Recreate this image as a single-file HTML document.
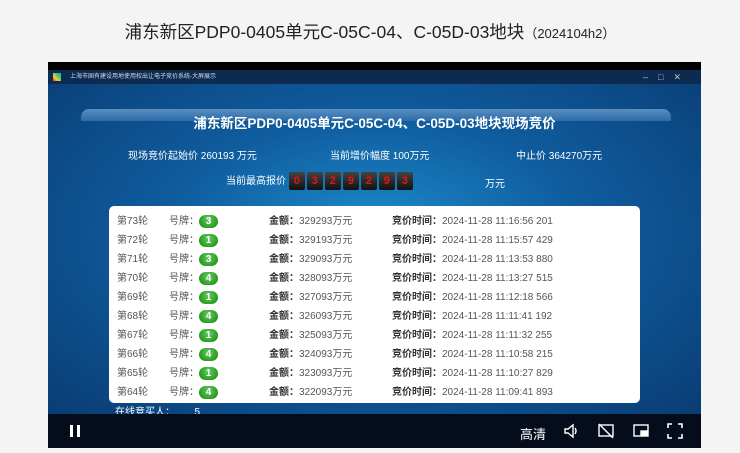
<!DOCTYPE html>
<html><head><meta charset="utf-8"><style>
*{margin:0;padding:0;box-sizing:border-box}
body{width:740px;height:453px;background:#f4f4f4;position:relative;overflow:hidden;font-family:"Liberation Sans","Noto Sans CJK SC",sans-serif}
.title{position:absolute;top:19px;left:0;width:740px;text-align:center;font-size:17.5px;color:#222}
.title small{font-size:13px}
.video{position:absolute;left:48px;top:62px;width:653px;height:386px;background:#000;overflow:hidden}
.tb{position:absolute;left:0;top:8px;width:100%;height:14px;background:#0d2a50;color:#cde;font-size:6px;line-height:14px;padding-left:22px}
.tb i{position:absolute;left:5px;top:3px;width:8px;height:8px;background:linear-gradient(45deg,#e33,#fc3,#3c6,#39f)}
.tb span{position:absolute;right:10px;top:0;font-size:9px;letter-spacing:10px;color:#bbb}
.bg{position:absolute;left:0;top:22px;width:100%;height:332px;background:radial-gradient(ellipse at 50% 45%,#1d8ccc 0%,#0f5c9e 45%,#0a3c74 100%)}
.hd{position:absolute;left:33px;top:47px;width:590px;height:12px;border-radius:8px 8px 0 0;background:linear-gradient(#5b8fc0,#2a6aa8)}
.h1{position:absolute;top:50px;left:0;width:100%;text-align:center;color:#fff;font-weight:bold;font-size:13.5px}
.info{position:absolute;top:85px;color:#fff;font-size:10px}
.box{position:absolute;left:61px;top:144px;width:531px;height:197px;background:#fff;border-radius:5px}
.row{position:absolute;left:8px;height:19px;font-size:10px;color:#555;width:520px}
.row span{position:absolute;top:0}
.b{font-weight:bold;color:#333}
.b b{font-weight:normal;color:#555}
.n{display:inline-block;width:19px;height:13px;border-radius:7px;background:radial-gradient(circle at 50% 35%,#6c6,#180);color:#fff;font-weight:bold;text-align:center;line-height:13px;font-size:10px;font-style:normal}
.d{display:inline-block;width:16px;height:18px;margin-right:2px;background:linear-gradient(#444,#111);border-radius:2px;color:#e11;font-weight:bold;text-align:center;line-height:18px;font-size:11px}
.ctrl{position:absolute;left:0;top:352px;width:100%;height:34px;background:#050d1c;color:#fff}
</style></head><body>
<div class="title">浦东新区PDP0-0405单元C-05C-04、C-05D-03地块<small>（2024104h2）</small></div>
<div class="video">
<div class="tb"><i></i>上海市国有建设用地使用权出让电子竞价系统-大屏展示<span>–□✕</span></div>
<div class="bg"></div>
<div class="hd"></div>
<div class="h1">浦东新区PDP0-0405单元C-05C-04、C-05D-03地块现场竞价</div>
<div class="info" style="left:80px">现场竞价起始价 260193 万元</div>
<div class="info" style="left:282px">当前增价幅度 100万元</div>
<div class="info" style="left:468px">中止价 364270万元</div>
<div class="info" style="left:178px;top:110px;line-height:18px">当前最高报价 <span class="d">0</span><span class="d">3</span><span class="d">2</span><span class="d">9</span><span class="d">2</span><span class="d">9</span><span class="d">3</span></div>
<div class="info" style="left:437px;top:113px">万元</div>
<div class="box">
<div class="row" style="top:6px"><span>第73轮</span><span style="left:52px">号牌：<i class="n">3</i></span><span class="b" style="left:152px">金额：<b>329293万元</b></span><span class="b" style="left:275px">竞价时间：<b>2024-11-28 11:16:56 201</b></span></div>
<div class="row" style="top:25px"><span>第72轮</span><span style="left:52px">号牌：<i class="n">1</i></span><span class="b" style="left:152px">金额：<b>329193万元</b></span><span class="b" style="left:275px">竞价时间：<b>2024-11-28 11:15:57 429</b></span></div>
<div class="row" style="top:44px"><span>第71轮</span><span style="left:52px">号牌：<i class="n">3</i></span><span class="b" style="left:152px">金额：<b>329093万元</b></span><span class="b" style="left:275px">竞价时间：<b>2024-11-28 11:13:53 880</b></span></div>
<div class="row" style="top:63px"><span>第70轮</span><span style="left:52px">号牌：<i class="n">4</i></span><span class="b" style="left:152px">金额：<b>328093万元</b></span><span class="b" style="left:275px">竞价时间：<b>2024-11-28 11:13:27 515</b></span></div>
<div class="row" style="top:82px"><span>第69轮</span><span style="left:52px">号牌：<i class="n">1</i></span><span class="b" style="left:152px">金额：<b>327093万元</b></span><span class="b" style="left:275px">竞价时间：<b>2024-11-28 11:12:18 566</b></span></div>
<div class="row" style="top:101px"><span>第68轮</span><span style="left:52px">号牌：<i class="n">4</i></span><span class="b" style="left:152px">金额：<b>326093万元</b></span><span class="b" style="left:275px">竞价时间：<b>2024-11-28 11:11:41 192</b></span></div>
<div class="row" style="top:120px"><span>第67轮</span><span style="left:52px">号牌：<i class="n">1</i></span><span class="b" style="left:152px">金额：<b>325093万元</b></span><span class="b" style="left:275px">竞价时间：<b>2024-11-28 11:11:32 255</b></span></div>
<div class="row" style="top:139px"><span>第66轮</span><span style="left:52px">号牌：<i class="n">4</i></span><span class="b" style="left:152px">金额：<b>324093万元</b></span><span class="b" style="left:275px">竞价时间：<b>2024-11-28 11:10:58 215</b></span></div>
<div class="row" style="top:158px"><span>第65轮</span><span style="left:52px">号牌：<i class="n">1</i></span><span class="b" style="left:152px">金额：<b>323093万元</b></span><span class="b" style="left:275px">竞价时间：<b>2024-11-28 11:10:27 829</b></span></div>
<div class="row" style="top:177px"><span>第64轮</span><span style="left:52px">号牌：<i class="n">4</i></span><span class="b" style="left:152px">金额：<b>322093万元</b></span><span class="b" style="left:275px">竞价时间：<b>2024-11-28 11:09:41 893</b></span></div>
</div>
<div class="info" style="left:67px;top:341px">在线竞买人：&nbsp;&nbsp;&nbsp;&nbsp;&nbsp;&nbsp;&nbsp;5</div>
<div class="ctrl">
<svg style="position:absolute;left:20px;top:9px" width="14" height="16"><rect x="2" y="2" width="3" height="12" fill="#fff"/><rect x="9" y="2" width="3" height="12" fill="#fff"/></svg>
<div style="position:absolute;left:472px;top:10px;font-size:13px">高清</div>
<svg style="position:absolute;left:514px;top:8px" width="18" height="18" fill="none" stroke="#fff" stroke-width="1.4"><path d="M3 7h3l5-4v12l-5-4H3z"/><path d="M13 6q2 3 0 6"/></svg>
<svg style="position:absolute;left:549px;top:8px" width="18" height="18" fill="none" stroke="#fff" stroke-width="1.4"><rect x="2" y="3" width="14" height="11"/><path d="M2 2l14 14"/></svg>
<svg style="position:absolute;left:584px;top:8px" width="18" height="18" fill="none" stroke="#fff" stroke-width="1.4"><rect x="2" y="3" width="14" height="11"/><rect x="9" y="9" width="6" height="4" fill="#fff"/></svg>
<svg style="position:absolute;left:618px;top:8px" width="18" height="18" fill="none" stroke="#fff" stroke-width="1.6"><path d="M2 6V2h4M12 2h4v4M16 12v4h-4M6 16H2v-4"/></svg>
</div>
</div>
</body></html>
